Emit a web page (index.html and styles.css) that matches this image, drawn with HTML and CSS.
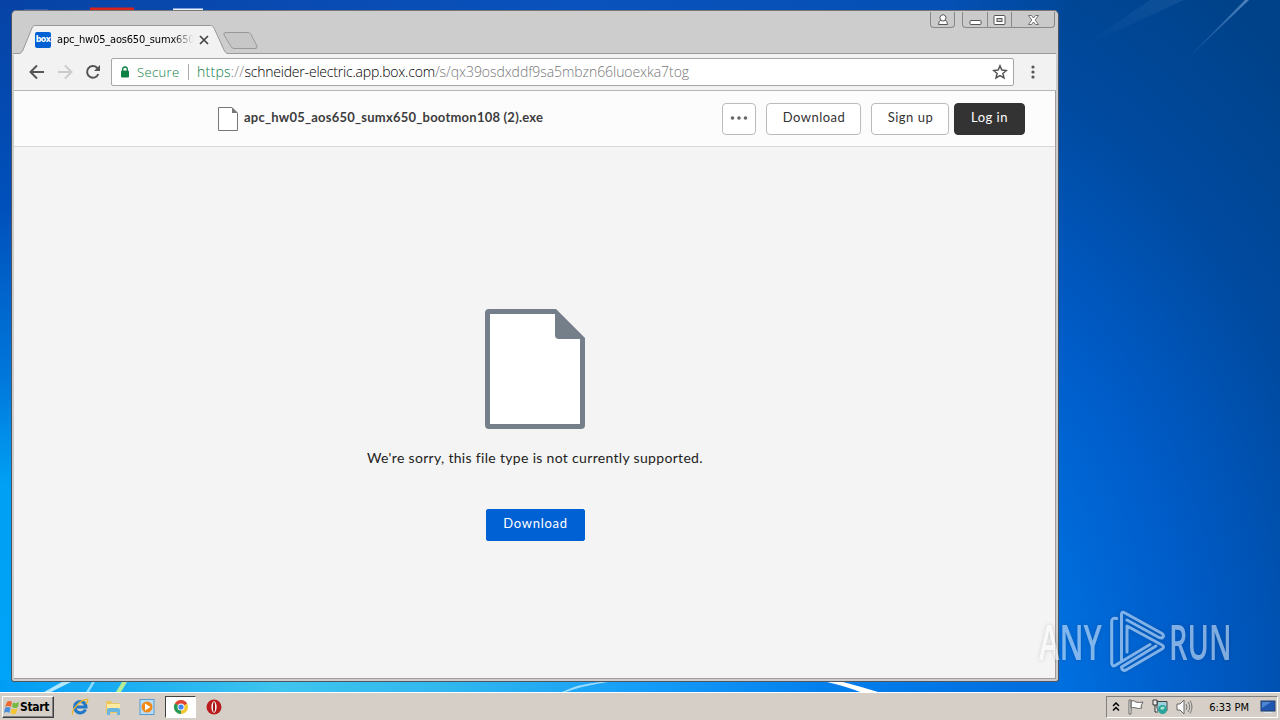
FILE: index.html
```html
<!DOCTYPE html>
<html>
<head>
  <meta charset="utf-8">
  <title>apc_hw05_aos650_sumx650_bootmon108 (2).exe</title>
  <link rel="stylesheet" href="styles.css">
</head>
<body>
  <div class="desktop">
    <!-- wallpaper light streaks -->
    <svg class="wallpaper" width="1280" height="720" viewBox="0 0 1280 720">
      <defs>
        <linearGradient id="streak" x1="0" y1="1" x2="1" y2="0">
          <stop offset="0" stop-color="#5b8fd0" stop-opacity="0"/>
          <stop offset="1" stop-color="#6f9fd4" stop-opacity=".7"/>
        </linearGradient>
      </defs>
      <path d="M1180 66L1245 0h4z" fill="url(#streak)"/>
      <path d="M1080 48L1150 0h34z" fill="url(#streak)" opacity=".2"/>
      <path d="M24 10h24" stroke="#5a7cc0" stroke-width="1"/>
      <path d="M90 9h44" stroke="#d9241c" stroke-width="3"/>
      <path d="M173 9.500h30" stroke="#eef4ff" stroke-width="2"/>
      <path d="M44 692L62 682h9L51 692z" fill="#b4e8ff"/>
      <path d="M86 692L92 682h3L89 692z" fill="#8fdcff"/>
      <path d="M116 692L122 682h5L121 692z" fill="#b5ec9a"/>
      <path d="M562 692Q578 684 600 682h8Q582 686 566 692z" fill="#9bdcff"/>
      <path d="M827 682h16Q862 687 878 692h-18Q848 687 827 682z" fill="#fff"/>
    </svg>

    <div class="window">
      <div class="tabstrip">
        <svg class="tab-shapes" width="260" height="30" viewBox="0 0 260 30">
          <path d="M0 28.500H6C8 28.500 9 27 10 25L19 3C20 1 21 .500 23 .500H197C199 .500 200 1 201 3L211 25C212 27 213 28.500 215 28.500V30H0z" fill="#f2f2f2"/>
          <path d="M0 28.500H6C8 28.500 9 27 10 25L19 3C20 1 21 .500 23 .500H197C199 .500 200 1 201 3L211 25C212 27 213 28.500 215 28.500" fill="none" stroke="#999"/>
          <path d="M213 7.500H235Q237 7.500 238 9.500L244 21Q245 23.500 242 23.500H221Q219 23.500 218 21.500L211 10Q210 7.500 213 7.500z" fill="#c7c7c7" stroke="#999"/>
        </svg>
        <div class="tab">
          <span class="favicon">box</span>
          <span class="tab-title">apc_hw05_aos650_sumx650</span>
          <svg class="tab-close" width="10" height="10" viewBox="0 0 10 10"><path d="M1 1l8 8M9 1L1 9" stroke="#444" stroke-width="1.700"/></svg>
        </div>
        <div class="captions">
          <span class="caption user">
            <svg width="12" height="12" viewBox="0 0 12 12"><path d="M4 6Q1.500 7 1.500 10.500H10.500Q10.500 7 8 6A3 3 0 1 0 4 6z" fill="#fff" stroke="#555"/><path d="M4 6.500Q6 7.500 8 6.500" fill="none" stroke="#555"/></svg>
          </span>
          <span class="caption-group">
            <span class="caption min"><svg width="13" height="12" viewBox="0 0 13 12"><rect x="1" y="6.500" width="11" height="4" rx="1" fill="#fff" stroke="#555"/></svg></span>
            <span class="caption max"><svg width="13" height="12" viewBox="0 0 13 12"><rect x="1" y="1.500" width="11" height="9" rx="1" fill="#fff" stroke="#555"/><rect x="4" y="4.500" width="5" height="3" fill="#ccc" stroke="#555"/></svg></span>
            <span class="caption close"><svg width="13" height="12" viewBox="0 0 13 12"><path d="M1.500 1.500h3L6.500 4l2-2.500h3L8.200 6l3.300 4.500h-3L6.500 8l-2 2.500h-3L4.800 6z" fill="#fff" stroke="#555" stroke-width=".8"/></svg></span>
          </span>
        </div>
      </div>

      <div class="toolbar">
        <svg width="16" height="16" viewBox="0 0 16 16"><path d="M15 8H2M8 1.500L1.500 8L8 14.500" fill="none" stroke="#555" stroke-width="2"/></svg>
        <svg width="16" height="16" viewBox="0 0 16 16"><path d="M1 8H14M8 1.500L14.500 8L8 14.500" fill="none" stroke="#ccc" stroke-width="2"/></svg>
        <svg width="16" height="16" viewBox="0 0 16 16"><path d="M13.300 10A5.800 5.800 0 1 1 12 3.800L13 5" fill="none" stroke="#555" stroke-width="2"/><path d="M15 1v6H9z" fill="#555"/></svg>
        <div class="address">
          <svg width="10" height="12" viewBox="0 0 10 12"><rect x="1" y="4.500" width="8" height="7" rx="1" fill="#0b8043"/><path d="M2.700 5V3.300a2.300 2.300 0 0 1 4.600 0V5" fill="none" stroke="#0b8043" stroke-width="1.300"/></svg>
          <span class="secure">Secure</span>
          <span class="url"><span class="scheme">https</span><span class="slashes">://</span><span class="host">schneider-electric.app.box.com</span><span class="path">/s/qx39osdxddf9sa5mbzn66luoexka7tog</span></span>
          <svg class="star" width="16" height="16" viewBox="0 0 16 16"><path d="M8 1.800l1.800 4.300 4.600.400-3.500 3 1.100 4.500L8 11.600 4 14l1.100-4.500-3.500-3 4.600-.400z" fill="none" stroke="#555" stroke-width="1.500"/></svg>
        </div>
        <svg class="menu-dots" width="4" height="14" viewBox="0 0 4 14"><g fill="#555"><circle cx="2" cy="2" r="1.600"/><circle cx="2" cy="7" r="1.600"/><circle cx="2" cy="12" r="1.600"/></g></svg>
      </div>

      <div class="page">
        <div class="page-header">
          <svg class="file-icon" width="20" height="24" viewBox="0 0 20 24"><path d="M.500.500H14L19.500 6V23.500H.500z" fill="#fff" stroke="#777"/><path d="M14 .500V6H19.500z" fill="#777"/></svg>
          <span class="file-name">apc_hw05_aos650_sumx650_bootmon108 (2).exe</span>
          <div class="actions">
            <button class="btn btn-more"><svg width="18" height="4" viewBox="0 0 18 4"><g fill="#666"><circle cx="2.500" cy="2" r="1.800"/><circle cx="9" cy="2" r="1.800"/><circle cx="15.500" cy="2" r="1.800"/></g></svg></button>
            <button class="btn btn-download">Download</button>
            <button class="btn btn-signup">Sign up</button>
            <button class="btn btn-login">Log in</button>
          </div>
        </div>
        <div class="preview">
          <svg width="100" height="120" viewBox="0 0 100 120"><path d="M4 0H71L100 29V116Q100 120 96 120H4Q0 120 0 116V4Q0 0 4 0z" fill="#757f8a"/><path d="M5 5H70V26Q70 30 74 30H95V115H5z" fill="#fff"/></svg>
          <p class="message">We're sorry, this file type is not currently supported.</p>
          <button class="btn btn-primary">Download</button>
        </div>
      </div>
    </div>

    <div class="watermark">
      <span class="mark-any">ANY</span>
      <svg width="56" height="62" viewBox="0 0 56 62"><path d="M6.700 8.500Q1.700 7 1.700 12V53Q2 57 5 55.500L40 34.500M11.500 50V4Q12 1 15 3L52 23.500Q55 26 52 28L49 27.500L17 10M17 42V16L52 35Q55 37 52 39L16 60Q12 61.500 11.500 57L46 36" fill="none" stroke="#fff" stroke-width="3" stroke-linejoin="round" stroke-linecap="round"/></svg>
      <span class="mark-run">RUN</span>
    </div>

    <div class="taskbar">
      <div class="start">
        <svg width="16" height="15" viewBox="0 0 16 15"><path d="M3 2Q6 0 8 2L7 7Q4 5 1 7z" fill="#ec6a32"/><path d="M9 2.500Q12 4 15 2L14 7Q11 9 8 7z" fill="#74b944"/><path d="M1 8Q4 6 6.500 8L5.500 13Q3 11 0 13z" fill="#4a8fdc"/><path d="M7.500 8.500Q10 10 13.500 8.500L12 13.500Q9 15 6.500 13z" fill="#f4c431"/></svg>
        Start
      </div>
      <div class="quick">
        <span class="task">
          <svg width="18" height="18" viewBox="0 0 18 18"><path d="M14.500 11.500A5.700 5.700 0 1 1 15 9H5" fill="none" stroke="#1f78c8" stroke-width="3"/><path d="M2 16.500C-1 13 10 1 16 1.500Q18 2 15 6" fill="none" stroke="#eeb52c" stroke-width="1.300"/></svg>
        </span>
        <span class="task">
          <svg width="18" height="18" viewBox="0 0 18 18"><path d="M2 3h5l1 2h7v10H2z" fill="#e9c85f"/><path d="M3 6h13v5H3z" fill="#fbeaa0"/><path d="M3 17v-5q0-2 2-2h9q2 0 2 2v5h-3v-3H6v3z" fill="#68b5df"/></svg>
        </span>
        <span class="task">
          <svg width="18" height="18" viewBox="0 0 18 18"><rect x="2" y="1.500" width="14" height="15" fill="#b9dcf7" stroke="#579bd3"/><circle cx="9" cy="9" r="5.500" fill="#f28b16"/><path d="M7 5.500L12.500 9 7 12.500z" fill="#fff"/></svg>
        </span>
        <span class="task active">
          <svg width="16" height="16" viewBox="0 0 16 16"><circle cx="8" cy="8" r="7" fill="#f4c62f"/><path d="M8 8L1.900 4.500A7 7 0 0 1 14.100 4.500z" fill="#db4437"/><path d="M8 8L1.900 4.500A7 7 0 0 0 8 15z" fill="#26985a"/><circle cx="8" cy="8" r="3.500" fill="#fff"/><circle cx="8" cy="8" r="2.600" fill="#4285f4"/></svg>
        </span>
        <span class="task">
          <svg width="18" height="18" viewBox="0 0 18 18"><circle cx="9" cy="9" r="7.500" fill="#b81d1c"/><ellipse cx="9" cy="9" rx="2.600" ry="5.800" fill="#fff"/><ellipse cx="9" cy="9" rx="1.100" ry="5" fill="#a31314"/></svg>
        </span>
      </div>
      <div class="tray">
        <svg width="8" height="10" viewBox="0 0 8 10"><path d="M1 4l3-3 3 3M1 8.500l3-3 3 3" fill="none" stroke="#000" stroke-width="1.500"/></svg>
        <svg width="16" height="16" viewBox="0 0 16 16"><path d="M1 1h2v14H1zM3 2q3-1 5 1 3 1 7 0l-2 4 1 2q-4 1-6 0-2-1-5 0z" fill="#fff" stroke="#666"/></svg>
        <svg width="16" height="16" viewBox="0 0 16 16"><path d="M5 2.500h10v9H5z" fill="#9bd3dc" stroke="#444"/><path d="M1 1h4v5H1zM3 6v7h3" fill="#eee" stroke="#333"/><circle cx="10.500" cy="10.500" r="4.500" fill="#2ba29c"/><path d="M8 9q3-3 5 0l-3 2z" fill="#a9e5cd"/></svg>
        <svg width="17" height="16" viewBox="0 0 17 16"><path d="M1 5h3l4-4v14l-4-4H1z" fill="#fff" stroke="#666"/><path d="M10 5q2 3 0 6M12 3q3.500 5 0 10M14 1.500q4 6.500 0 13" fill="none" stroke="#777"/></svg>
        <span class="clock">6:33 PM</span>
        <svg width="16" height="14" viewBox="0 0 16 14"><rect x="1" y="1" width="14" height="10" fill="#1f56b0" stroke="#23406e"/><path d="M2 2h9L2 8z" fill="#4f86d4"/><path d="M4 12.500h8" stroke="#dde6f2"/></svg>
      </div>
    </div>
  </div>
</body>
</html>
```
FILE: styles.css
```css
* {
  box-sizing: border-box;
}

body {
  margin: 0;
}

.desktop {
  position: relative;
  width: 1280px;
  height: 720px;
  overflow: hidden;
  display: flex;
  flex-direction: column;
  justify-content: flex-end;
  font-family: "DejaVu Sans Condensed", "DejaVu Sans", sans-serif;
  font-size: 11px;
  background:
    linear-gradient(90deg, #009cf5 0, #3fc5ee 22%, #30b7ee 35%, #159df8 50%, #0480ee 64%, #006fe0 80%, transparent 84%) 0 680px / 1280px 12px no-repeat,
    linear-gradient(180deg, #0743a6 0, #0050bb 30%, #0078dc 55%, #00a0f4 70%, #00a4f8 100%) 0 0 / 12px 692px no-repeat,
    linear-gradient(90deg, #0743a6 0, #0a52bd 45%, #0450b4 74%, transparent 84%) 0 0 / 1280px 12px no-repeat,
    radial-gradient(ellipse 620px 800px at 820px 700px, #0080f4 0, #0070e0 38%, #005cc8 60%, #004aa0 85%, #004289 110%);
}

.wallpaper {
  position: absolute;
  left: 0;
  top: 0;
}

/* browser window */
.window {
  position: absolute;
  left: 11px;
  top: 10px;
  width: 1048px;
  height: 672px;
  display: flex;
  flex-direction: column;
  padding: 1px 2px 2px;
  border: 1px solid #4d5660;
  border-top-color: #777;
  border-radius: 5px 5px 3px 3px;
  background: #cdcdcd;
}

.tabstrip {
  position: relative;
  height: 42px;
  flex: none;
  display: flex;
  justify-content: space-between;
  border-bottom: 1px solid #999;
}

.tab-shapes {
  position: absolute;
  left: -1px;
  top: 13px;
}

.tab {
  position: relative;
  display: flex;
  align-items: center;
  height: 17px;
  margin: 19px 0 0 21px;
}

.favicon {
  width: 16px;
  height: 16px;
  border-radius: 2px;
  background: #0061d5;
  color: #fff;
  font: bold 8px/16px "DejaVu Sans", sans-serif;
  letter-spacing: -0.6px;
  text-align: center;
}

.tab-title {
  width: 137px;
  margin: 0 5px 0 6px;
  white-space: nowrap;
  color: #000;
  letter-spacing: -0.18px;
  -webkit-mask-image: linear-gradient(90deg, #000 84%, transparent);
  mask-image: linear-gradient(90deg, #000 84%, transparent);
}

.captions {
  display: flex;
  gap: 7px;
  height: 16px;
  margin-right: 1px;
}

.caption {
  display: flex;
  align-items: center;
  justify-content: center;
  width: 25px;
}

.user,
.caption-group {
  border: 1px solid #888;
  border-top: 0;
  border-radius: 0 0 4px 4px;
  background: #cacaca;
}

.caption-group {
  display: flex;
}

.min {
  width: 24px;
}

.max {
  border: 1px solid #888;
  border-width: 0 1px;
}

.close {
  width: 42px;
}

.toolbar {
  height: 37px;
  flex: none;
  display: flex;
  align-items: center;
  gap: 12px;
  padding: 0 21px 0 15px;
  background: #f2f2f2;
  border-bottom: 1px solid #b6b6b6;
}

.address {
  flex: 1;
  display: flex;
  align-items: center;
  height: 28px;
  margin: 0 5px 0 -2px;
  padding: 0 5px 0 8px;
  border: 1px solid #a6a6a6;
  border-radius: 2px;
  background: #fff;
  font: 14px "Open Sans", sans-serif;
  font-weight: 300;
  white-space: nowrap;
}

.secure {
  width: 52px;
  margin-left: 7px;
  border-right: 1px solid #aaa;
  line-height: 16px;
  font-size: 13px;
  letter-spacing: 0.35px;
  color: #0b8043;
}

.url {
  margin-left: 8px;
  padding-bottom: 2px;
}

.scheme {
  color: #0b8043;
  letter-spacing: 0.25px;
}

.slashes {
  color: #808080;
  letter-spacing: 0.25px;
}

.host {
  color: #000;
  letter-spacing: -0.2px;
}

.path {
  color: #777;
  letter-spacing: -0.06px;
}

.star {
  margin-left: auto;
}

/* page */
.page {
  flex: 1;
  display: flex;
  flex-direction: column;
  border: 1px solid #a39c9a;
  border-top: 0;
  border-left: 0;
  background: #f4f4f4;
  font-family: Lato, sans-serif;
}

.page-header {
  height: 56px;
  flex: none;
  display: flex;
  align-items: center;
  padding: 0 30px 0 204px;
  background: #fcfcfc;
  border-bottom: 1px solid #d8d8d8;
}

.file-name {
  margin-left: 6px;
  padding-bottom: 3px;
  color: #3c3c3c;
  font-size: 13px;
  font-weight: bold;
  letter-spacing: 0.23px;
}

.actions {
  display: flex;
  margin-left: auto;
}

.btn {
  height: 32px;
  padding: 0 0 3px 1px;
  border: 1px solid #bbb;
  border-radius: 4px;
  background: #fff;
  color: #333;
  font: 13px Lato, sans-serif;
  letter-spacing: 0.5px;
}

.btn-more {
  width: 34px;
  margin-right: 10px;
  padding: 0 0 8px;
}

.btn-download {
  width: 95px;
  margin-right: 10px;
}

.btn-signup {
  width: 78px;
  margin-right: 5px;
}

.btn-login {
  width: 71px;
  padding-left: 0;
  border-color: #333;
  background: #333;
  color: #fff;
}

.preview {
  flex: 1;
  display: flex;
  flex-direction: column;
  align-items: center;
  padding-top: 162px;
}

.message {
  margin: 19px 0 42px 1px;
  color: #222;
  font-size: 14px;
  line-height: 19px;
  letter-spacing: 0.32px;
}

.btn-primary {
  width: 99px;
  margin-left: 2px;
  padding: 0 0 4px;
  border-color: #0061d5;
  border-radius: 2px;
  background: #0061d5;
  color: #fff;
  letter-spacing: 0.7px;
}

/* watermark over the desktop */
.watermark {
  position: absolute;
  left: 1039px;
  top: 609px;
  display: flex;
  align-items: center;
  color: #fff;
  opacity: 0.5;
  font: 600 49px/64px "Open Sans", sans-serif;
  filter: drop-shadow(0 0 2px rgba(0, 0, 0, 0.3));
}

.mark-any,
.mark-run {
  width: 64px;
  transform-origin: left;
}

.mark-any {
  transform: scaleX(0.63);
}

.mark-run {
  transform: scaleX(0.59);
}

.watermark svg {
  margin: 0 3px 0 7px;
}

/* taskbar */
.taskbar {
  position: relative;
  display: flex;
  align-items: center;
  height: 28px;
  padding: 2px 2px 1px;
  border-top: 1px solid #fff;
  background: #d5cfc7;
}

.start {
  display: flex;
  align-items: center;
  width: 52px;
  height: 22px;
  padding-left: 1px;
  border: 1px solid #fff;
  border-right-color: #404040;
  border-bottom-color: #404040;
  box-shadow: inset -1px -1px #808080;
  font-size: 12px;
  font-weight: bold;
  letter-spacing: -0.3px;
}

.quick {
  display: flex;
  gap: 2px;
  margin-left: 10px;
}

.task {
  display: flex;
  align-items: center;
  justify-content: center;
  width: 31.600px;
  height: 22px;
}

.task.active {
  border: 1px solid #fff;
  border-top-color: #404040;
  border-left-color: #404040;
  background: #fff;
}

.tray {
  display: flex;
  align-items: center;
  gap: 8px;
  height: 22px;
  margin-left: auto;
  padding: 0 1px 0 5px;
  border: 1px solid #fff;
  border-top-color: #808080;
  border-left-color: #808080;
}

.clock {
  margin: 0 3px 0 8px;
  white-space: nowrap;
}
```
